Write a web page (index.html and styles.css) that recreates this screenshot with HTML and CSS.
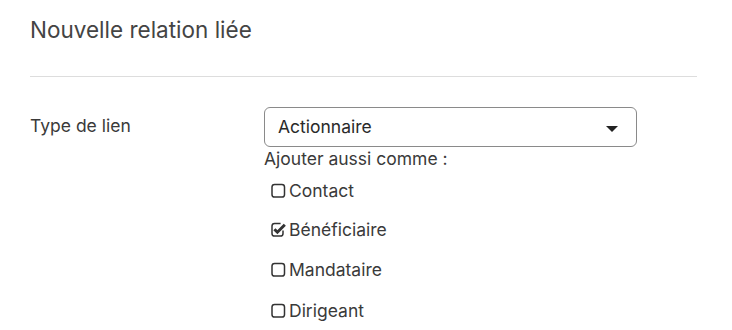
FILE: index.html
```html
<!DOCTYPE html>
<html lang="fr">
<head>
<meta charset="utf-8">
<title>Nouvelle relation liée</title>
<link rel="stylesheet" href="styles.css">
</head>
<body>
<div class="panel">
  <h2 class="title">Nouvelle relation liée</h2>
  <hr class="divider">
  <div class="form-row">
    <label class="label">Type de lien</label>
    <div class="field">
      <div class="select">
        <span class="select-value">Actionnaire</span>
        <svg class="caret" width="12" height="6" viewBox="0 0 12 6"><path d="M0 0H12L6 6Z" fill="#222"/></svg>
      </div>
      <div class="hint">Ajouter aussi comme :</div>
      <ul class="checks">
        <li class="check">
          <svg class="box" width="15" height="15" viewBox="0 0 15 15"><rect x="1" y="1.5" width="12.5" height="12.5" rx="2.6" fill="none" stroke="#333" stroke-width="1.5"/></svg>
          <span>Contact</span>
        </li>
        <li class="check">
          <svg class="box" width="15" height="15" viewBox="0 0 15 15"><path d="M12 8.6V11.4Q12 14 9.4 14H3.6Q1 14 1 11.4V4.1Q1 1.5 3.6 1.5H9.6" fill="none" stroke="#333" stroke-width="1.5"/><path d="M3.4 7.2L6.4 10.2L13.8 2.8" fill="none" stroke="#333" stroke-width="3"/></svg>
          <span>Bénéficiaire</span>
        </li>
        <li class="check">
          <svg class="box" width="15" height="15" viewBox="0 0 15 15"><rect x="1" y="1.5" width="12.5" height="12.5" rx="2.6" fill="none" stroke="#333" stroke-width="1.5"/></svg>
          <span>Mandataire</span>
        </li>
        <li class="check">
          <svg class="box" width="15" height="15" viewBox="0 0 15 15"><rect x="1" y="1.5" width="12.5" height="12.5" rx="2.6" fill="none" stroke="#333" stroke-width="1.5"/></svg>
          <span>Dirigeant</span>
        </li>
      </ul>
    </div>
  </div>
</div>
</body>
</html>
```

FILE: styles.css
```css
html, body {
  margin: 0;
  padding: 0;
  background: #fff;
}
body {
  font-family: Inter, "Noto Sans", "Liberation Sans", sans-serif;
  color: #3a3a3a;
}
.panel {
  padding: 0 35px 0 30px;
}
.title {
  margin: 0;
  padding-top: 14px;
  font-size: 22.5px;
  font-weight: 400;
  line-height: 32px;
  color: #444;
}
.divider {
  margin: 30px 0 0;
  border: 0;
  border-top: 1px solid #ddd;
  height: 0;
}
.form-row {
  display: flex;
  margin-top: 30px;
}
.label {
  width: 234px;
  flex: none;
  font-size: 17.5px;
  line-height: 24px;
  padding-top: 7px;
}
.field {
  display: flex;
  flex-direction: column;
}
.select {
  width: 373px;
  height: 40px;
  box-sizing: border-box;
  border: 1px solid #8a8a8a;
  border-radius: 6px;
  display: flex;
  align-items: center;
  justify-content: space-between;
  padding: 0 18px 0 13px;
}
.select-value {
  font-size: 17.5px;
  color: #2a2a2a;
  margin-top: -1px;
}
.caret {
  margin-top: 4px;
}
.hint {
  font-size: 17.5px;
  line-height: 24px;
}
.checks {
  list-style: none;
  margin: 0;
  padding: 0 0 0 7px;
}
.check {
  display: flex;
  align-items: center;
  gap: 3px;
  height: 40.5px;
  font-size: 17.5px;
}
.check:first-child {
  height: 38px;
}
.box {
  flex: none;
}
```
